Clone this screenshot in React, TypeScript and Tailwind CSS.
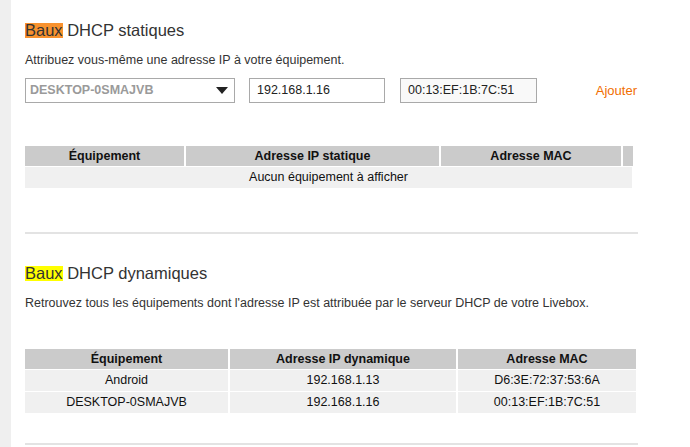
import React from "react";

type Lease = {
  device: string;
  ip: string;
  mac: string;
};

const dynamicLeases: Lease[] = [
  { device: "Android", ip: "192.168.1.13", mac: "D6:3E:72:37:53:6A" },
  { device: "DESKTOP-0SMAJVB", ip: "192.168.1.16", mac: "00:13:EF:1B:7C:51" },
];

/**
 * セクション見出し（Baux 部分にハイライト）
 */
const SectionTitle = ({ rest, highlight }: { rest: string; highlight: string }) => {
  return (
    <h2 className="text-[16.5px] leading-[20px] text-[#333]">
      <span className={`inline-block h-[15px] leading-[15px] ${highlight}`}>Baux</span> {rest}
    </h2>
  );
};

const StaticLeases = () => {
  return (
    <section>
      <div className="mt-[20px]">
        <SectionTitle rest="DHCP statiques" highlight="bg-[#f8922e]" />
      </div>
      <p className="mt-[12px] text-[12.5px] leading-[16px] text-[#333]">
        Attribuez vous-même une adresse IP à votre équipement.
      </p>
      <div className="mt-[10px] flex items-center h-[25px] text-[12.5px]">
        <div className="flex items-center justify-between w-[210px] h-[25px] border border-[#a9a9a9] pl-[4px] pr-[6px]">
          <span className="font-bold text-[#9a9a9a]">DESKTOP-0SMAJVB</span>
          <svg width="12" height="7" viewBox="0 0 12 7">
            <path d="M0 0 L12 0 L6 7 Z" fill="#222" />
          </svg>
        </div>
        <div className="ml-[14px] w-[136px] h-[25px] border border-[#a9a9a9] pl-[7px] leading-[23px] text-[#222]">
          192.168.1.16
        </div>
        <div className="ml-[15px] w-[137px] h-[25px] border border-[#a9a9a9] bg-[#f9f9f9] pl-[7px] leading-[23px] text-[#222]">
          00:13:EF:1B:7C:51
        </div>
        <a className="ml-auto mr-[1px] text-[13px] text-[#f16e00] leading-[16px]">Ajouter</a>
      </div>
      <div className="mt-[43px] w-[607px] text-[12.5px]">
        <div className="grid grid-cols-[159px_253px_180px_10px] gap-x-[2px] h-[20px] font-bold text-[#111] leading-[20px]">
          <div className="bg-[#cbcbcb] text-center">Équipement</div>
          <div className="bg-[#cbcbcb] text-center">Adresse IP statique</div>
          <div className="bg-[#cbcbcb] text-center">Adresse MAC</div>
          <div className="bg-[#cbcbcb]"></div>
        </div>
        <div className="mt-[1px] h-[21px] bg-[#f0f0f0] text-center leading-[21px] text-[#111]">
          Aucun équipement à afficher
        </div>
      </div>
    </section>
  );
};

const DynamicLeases = () => {
  return (
    <section>
      <div className="mt-[29px]">
        <SectionTitle rest="DHCP dynamiques" highlight="bg-[#ffff00]" />
      </div>
      <p className="mt-[12px] text-[12.5px] leading-[16px] text-[#333]">
        Retrouvez tous les équipements dont l'adresse IP est attribuée par le serveur DHCP de votre Livebox.
      </p>
      <div className="mt-[38px] w-[611px] text-[12.5px] text-[#111]">
        <div className="grid grid-cols-[203px_226px_178px] gap-x-[2px] h-[20px] font-bold leading-[20px]">
          <div className="bg-[#cbcbcb] text-center">Équipement</div>
          <div className="bg-[#cbcbcb] text-center">Adresse IP dynamique</div>
          <div className="bg-[#cbcbcb] text-center">Adresse MAC</div>
        </div>
        {dynamicLeases.map((lease) => (
          <div
            key={lease.mac}
            className="mt-[1px] grid grid-cols-[203px_226px_178px] gap-x-[2px] h-[21px] leading-[21px]"
          >
            <div className="bg-[#f0f0f0] text-center">{lease.device}</div>
            <div className="bg-[#f0f0f0] text-center">{lease.ip}</div>
            <div className="bg-[#f0f0f0] text-center">{lease.mac}</div>
          </div>
        ))}
      </div>
    </section>
  );
};

export default function App() {
  return (
    <div className="flex w-[690px] h-[447px] overflow-hidden bg-white font-['Liberation_Sans',Arial,sans-serif]">
      <div className="w-[11px] shrink-0 bg-[#efefef]"></div>
      <div className="pl-[14px] w-[627px]">
        <StaticLeases />
        <div className="mt-[44px] h-[2px] bg-[#e3e3e3]"></div>
        <DynamicLeases />
        <div className="mt-[30px] h-[2px] bg-[#e3e3e3]"></div>
      </div>
    </div>
  );
}
